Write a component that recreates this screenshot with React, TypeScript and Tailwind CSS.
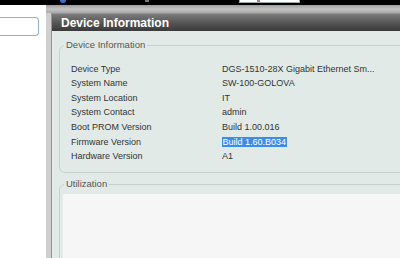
const rows: [string, string][] = [
  ['Device Type', 'DGS-1510-28X Gigabit Ethernet Sm...'],
  ['System Name', 'SW-100-GOLOVA'],
  ['System Location', 'IT'],
  ['System Contact', 'admin'],
  ['Boot PROM Version', 'Build 1.00.016'],
  ['Firmware Version', 'Build 1.60.B034'],
  ['Hardware Version', 'A1'],
]

export default function App() {
  return (
    <div className="w-[400px] h-[258px] overflow-hidden bg-white font-['Liberation_Sans',Arial,sans-serif] flex flex-col">
      {/* browser chrome remnant */}
      <div className="h-[5px] shrink-0 bg-black flex items-start">
        <div className="ml-[60px] w-[6px] h-[3px] rounded-b-full bg-[#3b6fd4]" />
        <div className="ml-[79px] w-[4px] h-[2px] bg-[#777]" />
        <div className="ml-[90px] w-[61px] h-[3px] bg-white border-x border-b border-[#9aa] flex">
          <div className="ml-[17px] w-[3px] h-[2px] bg-[#b78]" />
        </div>
      </div>

      <div className="flex flex-1 min-h-0">
        {/* left tree panel */}
        <div className="w-[46px] shrink-0 bg-white pt-[12px]">
          <div className="w-[39px] h-[19px] border border-l-0 border-[#8fb2d4] rounded-r-[4px] bg-white" />
        </div>
        <div className="w-[5px] shrink-0 bg-[#cfcfcf]" />

        {/* main */}
        <div className="flex flex-col w-[600px] shrink-0">
          <div className="h-[8px] shrink-0 bg-gradient-to-b from-[#9c9c9c] via-[#c4c4c4] to-[#a8a8a8] -ml-[5px]" />
          <div className="flex-1 min-h-0 flex flex-col border-t border-l border-[#6f9cc6] bg-[#e2eae8]">
            <div className="h-[17px] shrink-0 bg-gradient-to-b from-[#7c7c7c] via-[#575757] to-[#3a3a3a] pl-[9px] flex items-center">
              <span className="text-white font-bold text-[12px] leading-none">Device Information</span>
            </div>

            <div className="pl-[7px] pt-[8px]">
              <fieldset className="border border-[#c6d0cd] rounded-[6px] pl-[4px] pb-[8px]">
                <legend className="px-[2px] text-[9.5px] leading-[12px] text-[#555]">Device Information</legend>
                <div className="pt-[11px] pl-[7px]">
                  {rows.map(([label, value]) => (
                    <div key={label} className="flex h-[14.6px] items-center text-[9px] text-[#333]">
                      <div className="w-[151px] shrink-0">{label}</div>
                      <div>
                        {label === 'Firmware Version' ? (
                          <span className="bg-[#3a8eea] text-white px-[0.5px]">{value}</span>
                        ) : (
                          value
                        )}
                      </div>
                    </div>
                  ))}
                </div>
              </fieldset>

              <fieldset className="mt-[5px] border border-[#c6d0cd] rounded-[6px] pl-[3px] h-[120px]">
                <legend className="ml-[1px] px-[2px] text-[9.5px] leading-[12px] text-[#555]">Utilization</legend>
                <div className="mt-[4px] h-full bg-[#f6f6f6]" />
              </fieldset>
            </div>
          </div>
        </div>
      </div>
    </div>
  )
}
